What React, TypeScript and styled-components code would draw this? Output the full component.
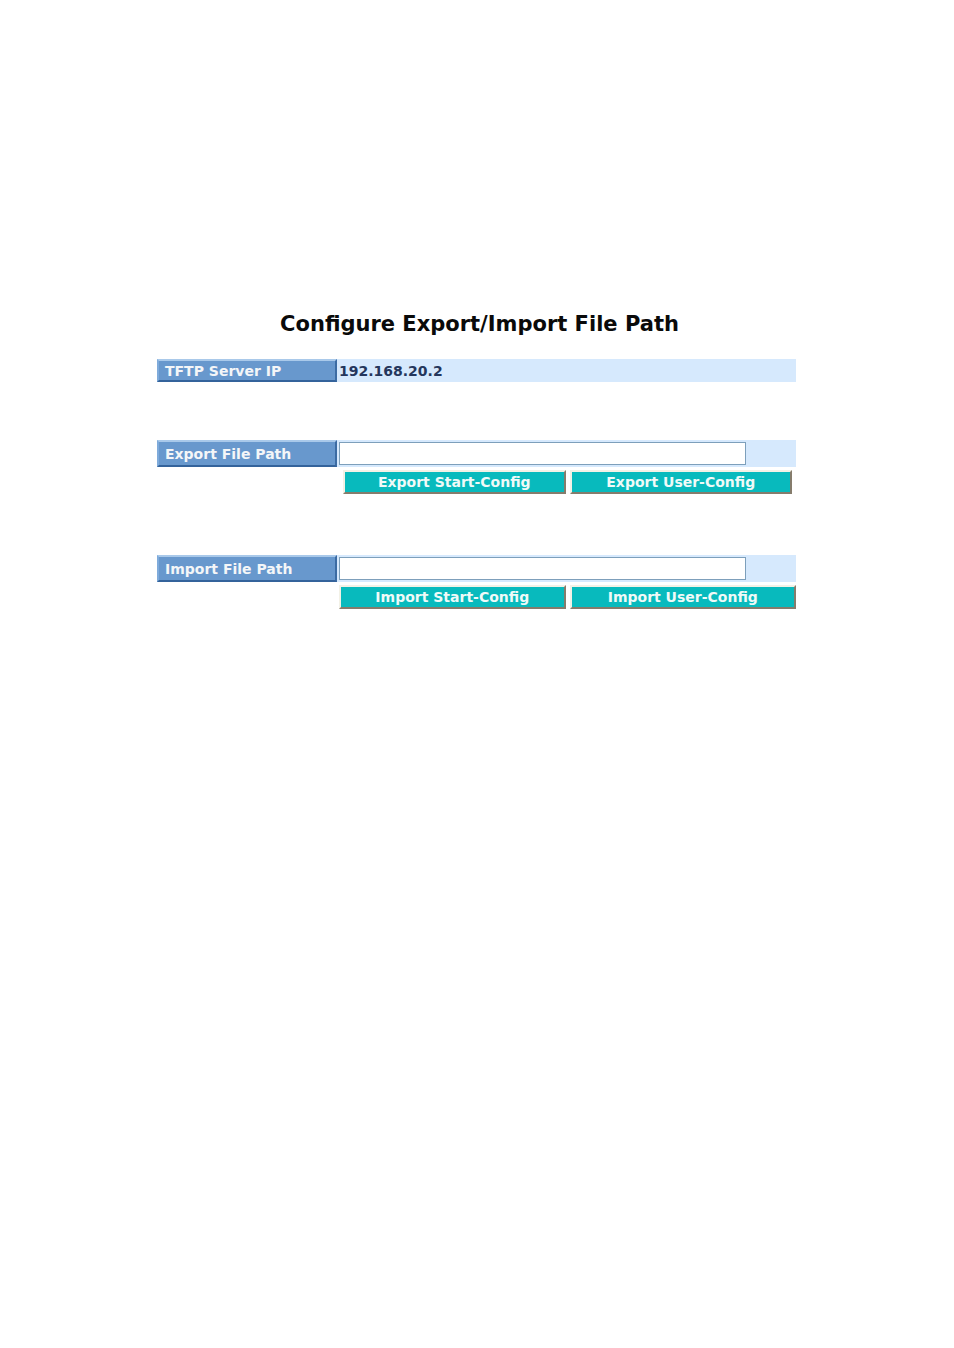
import { useState } from "react";
import styled, { createGlobalStyle } from "styled-components";

const GlobalStyle = createGlobalStyle`
  * { box-sizing: border-box; }
  body {
    margin: 0;
    background: #ffffff;
    font-family: "DejaVu Sans", Verdana, sans-serif;
  }
`;

const Page = styled.main`
  min-height: 100vh;
  padding: 310px 158px 48px 157px;
`;

const Title = styled.h1`
  margin: 0 0 21px;
  padding-left: 6px;
  color: #0a0a0a;
  font-size: 21px;
  line-height: 28px;
  font-weight: 700;
  text-align: center;
  white-space: nowrap;
`;

const Section = styled.section<{ $after: number }>`
  margin-bottom: ${(p) => p.$after}px;
`;

const Row = styled.div<{ $height: number }>`
  display: grid;
  grid-template-columns: 180px minmax(0, 1fr);
  column-gap: 2px;
  align-items: center;
  height: ${(p) => p.$height}px;
  background: #d6e9fd;
`;

const RowLabel = styled.label`
  display: flex;
  align-items: center;
  align-self: stretch;
  padding-left: 6px;
  border: 2px solid;
  border-color: #a9c9ea #3b6ba3 #34639b #7fabdb;
  background: #6898cd;
  color: #f4f6f8;
  font-size: 14px;
  line-height: 16px;
  font-weight: 700;
  white-space: nowrap;
`;

const Address = styled.output`
  color: #24365c;
  font-size: 14px;
  line-height: 16px;
  font-weight: 700;
`;

const PathInput = styled.input`
  width: calc(100% - 50px);
  height: 23px;
  padding: 2px 4px;
  border: 1px solid #7d9fbb;
  border-radius: 0;
  background: #ffffff;
  font: 14px "DejaVu Sans", Verdana, sans-serif;
`;

const Actions = styled.div<{ $inset: number }>`
  display: grid;
  grid-template-columns: 1fr 1fr;
  column-gap: 4px;
  margin: 3px ${(p) => p.$inset}px 0 ${(p) => 182 + p.$inset}px;
`;

const ActionButton = styled.button`
  height: 24px;
  padding: 0;
  border: 2px solid;
  border-color: #f3f1e6 #857c6c #857c6c #f3f1e6;
  border-radius: 0;
  background: #08babd;
  color: #f0faf8;
  font: 700 14px/16px "DejaVu Sans", Verdana, sans-serif;
  white-space: nowrap;
  cursor: pointer;
`;

function FilePath({ kind, inset, after }: { kind: "Export" | "Import"; inset: number; after: number }) {
  const [path, setPath] = useState("");
  const id = `${kind.toLowerCase()}-path`;
  return (
    <Section $after={after}>
      <Row $height={27}>
        <RowLabel htmlFor={id}>{kind} File Path</RowLabel>
        <PathInput id={id} type="text" value={path} onChange={(e) => setPath(e.target.value)} />
      </Row>
      <Actions $inset={inset}>
        <ActionButton type="button">{kind} Start-Config</ActionButton>
        <ActionButton type="button">{kind} User-Config</ActionButton>
      </Actions>
    </Section>
  );
}

export default function App() {
  return (
    <>
      <GlobalStyle />
      <Page>
        <Title>Configure Export/Import File Path</Title>
        <Section $after={58}>
          <Row $height={23}>
            <RowLabel htmlFor="server-ip">TFTP Server IP</RowLabel>
            <Address id="server-ip">192.168.20.2</Address>
          </Row>
        </Section>
        <FilePath kind="Export" inset={4} after={61} />
        <FilePath kind="Import" inset={0} after={0} />
      </Page>
    </>
  );
}
